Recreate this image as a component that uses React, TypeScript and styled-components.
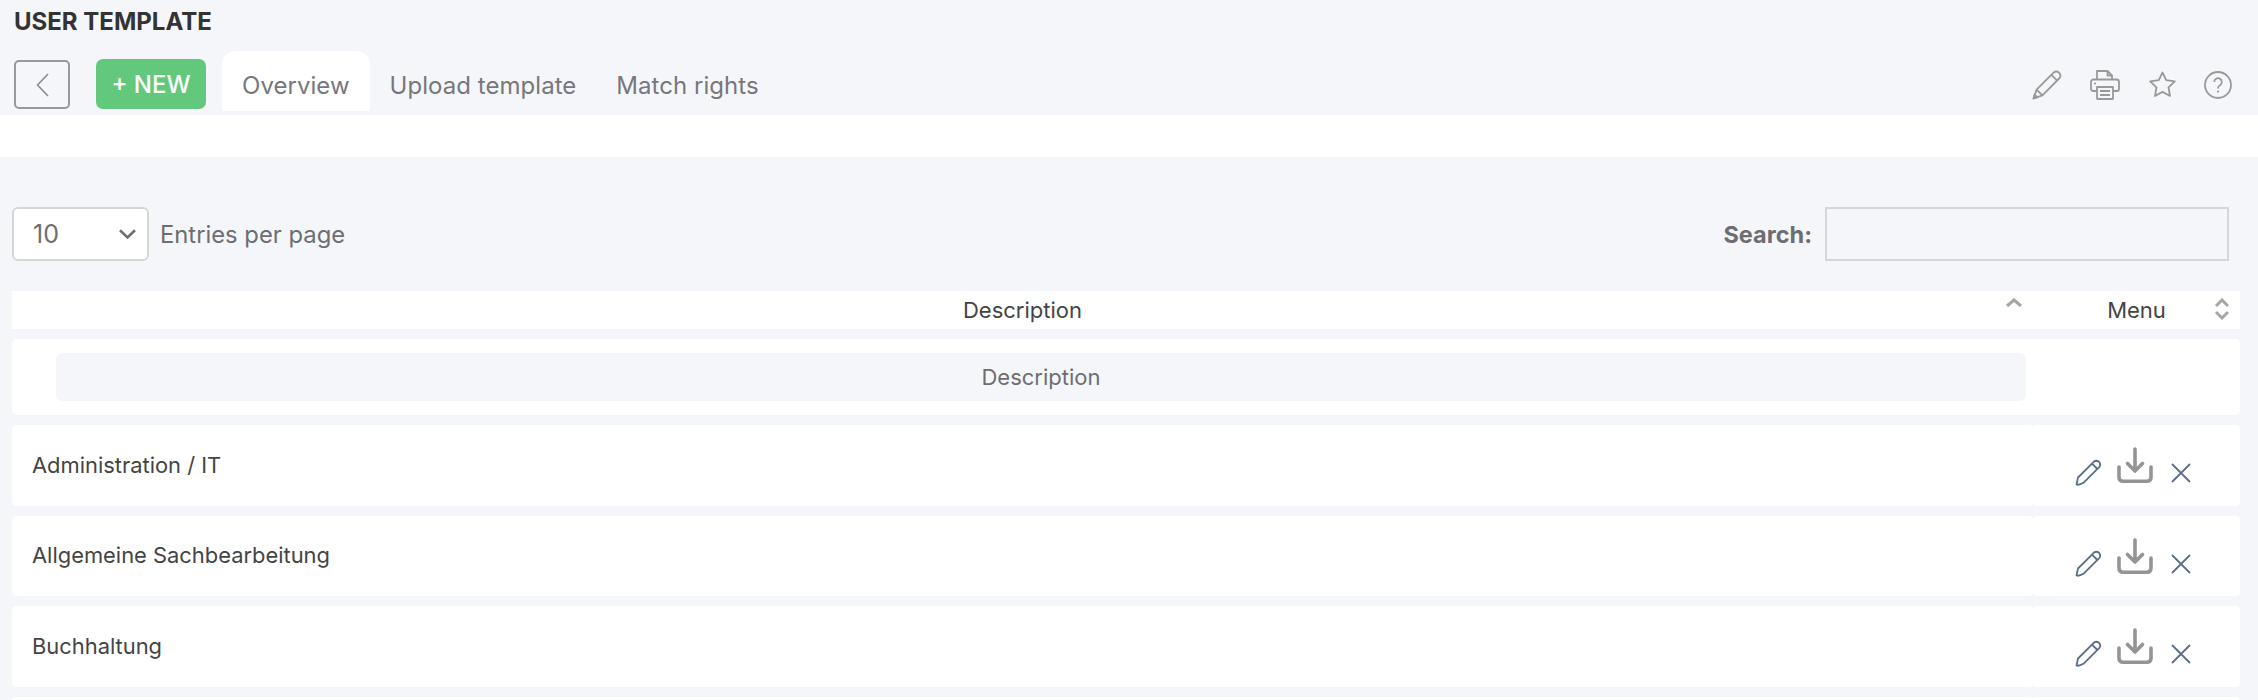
import React from "react";
import styled, { createGlobalStyle } from "styled-components";

const Global = createGlobalStyle`
  html, body { margin: 0; padding: 0; background: #f5f6fa; }
  body { font-family: Inter, "Liberation Sans", sans-serif; overflow: hidden; }
  * { box-sizing: border-box; }
`;

const Page = styled.div`
  width: 2258px;
  height: 700px;
  overflow: hidden;
  background: #f5f6fa;
`;

const Header = styled.header`
  height: 115px;
  padding: 10px 26px 0 14px;
  display: flex;
  flex-direction: column;
`;

const Title = styled.h1`
  margin: 0;
  height: 24px;
  font-size: 24px;
  line-height: 24px;
  font-weight: 700;
  color: #333;
`;

const Toolbar = styled.div`
  margin-top: 17px;
  height: 60px;
  display: flex;
  align-items: flex-end;
`;

const BackButton = styled.button`
  width: 56px;
  height: 49px;
  margin-bottom: 2px;
  padding: 0;
  display: flex;
  align-items: center;
  justify-content: center;
  background: transparent;
  border: 2px solid #999;
  border-radius: 5px;
`;

const NewButton = styled.button`
  width: 110px;
  height: 50px;
  margin: 0 16px 2px 26px;
  padding: 0;
  background: #62c97c;
  border: 0;
  border-radius: 7px;
  color: #fff;
  font: 500 24px Inter, sans-serif;
`;

const Tab = styled.div<{ $active?: boolean }>`
  height: 60px;
  padding: 9px 20px 0;
  display: flex;
  align-items: center;
  font-size: 24px;
  letter-spacing: 0.04px;
  color: #77777c;
  background: ${(p) => (p.$active ? "#fff" : "transparent")};
  border-radius: 14px 14px 0 0;
`;

const HeaderIcons = styled.div`
  margin-left: auto;
  height: 60px;
  padding-top: 7px;
  display: flex;
  align-items: center;
  gap: 28.5px;
  color: #999;
`;

const Band = styled.div`
  height: 42px;
  background: #fff;
`;

const Content = styled.main`
  padding: 50px 18px 0 12px;
`;

const Controls = styled.div`
  height: 54px;
  padding-right: 11px;
  display: flex;
  align-items: center;
  justify-content: space-between;
`;

const LengthControl = styled.div`
  display: flex;
  align-items: center;
  gap: 11px;
  font-size: 23.8px;
  color: #6e6e72;
`;

const SelectBox = styled.div`
  width: 137px;
  height: 54px;
  padding: 0 11px 0 19px;
  display: flex;
  align-items: center;
  justify-content: space-between;
  background: #fff;
  border: 2px solid #d6d6d8;
  border-radius: 6px;
  font-size: 25px;
  color: #6e6e72;
`;

const SearchControl = styled.label`
  display: flex;
  align-items: center;
  gap: 13px;
  font-size: 23.5px;
  font-weight: 700;
  color: #6e6e72;
`;

const SearchInput = styled.input`
  width: 404px;
  height: 54px;
  background: transparent;
  border: 2px solid #d6d6d8;
`;

const Table = styled.div`
  margin-top: 30px;
  display: flex;
  flex-direction: column;
`;

const Row = styled.div<{ $height: string; $gap: string }>`
  height: ${(p) => p.$height};
  margin-bottom: ${(p) => p.$gap};
  display: grid;
  grid-template-columns: 2021px 207px;
  gap: 0;
  flex: none;
`;

const HeadCell = styled.div`
  padding: 0 12px 0 12px;
  display: flex;
  align-items: center;
  justify-content: center;
  background: #fff;
  font-size: 22px;
  color: #444;
  position: relative;
`;

const SortMark = styled.span`
  position: absolute;
  right: 11px;
  top: 7px;
  display: flex;
  color: #aaa;
`;

const FilterCell = styled.div`
  padding: 0 7px 0 44px;
  display: flex;
  align-items: center;
  background: #fff;
  border-radius: 5px 0 0 5px;
`;

const BlankCell = styled.div`
  background: #fff;
  border-radius: 0 5px 5px 0;
`;

const FilterBox = styled.div`
  width: 100%;
  height: 48px;
  display: flex;
  align-items: center;
  justify-content: center;
  background: #f5f6fa;
  border-radius: 6px;
  font-size: 22px;
  color: #6e6e72;
`;

const TextCell = styled.div`
  padding-left: 20px;
  padding-bottom: 1px;
  display: flex;
  align-items: center;
  background: #fff;
  border-radius: 4px;
  font-size: 21.9px;
  color: #444;
`;

const ActionCell = styled.div`
  padding: 22px 0 0 42px;
  display: flex;
  align-items: flex-start;
  background: #fff;
  border-radius: 4px;
`;

const EditIcon = styled.svg`
  margin-top: 12px;
  color: #5a6e8c;
`;

const DownloadIcon = styled.svg`
  margin-left: 15px;
  color: #949494;
`;

const CloseIcon = styled.svg`
  margin: 16px 0 0 18px;
  color: #5a6e8c;
`;

const Chevron = ({ dir }: { dir: "left" | "down" }) =>
  dir === "left" ? (
    <svg width="13" height="24" viewBox="0 0 13 24" fill="none" stroke="#8c8c8c" strokeWidth="1.6">
      <path d="M12 1 1.5 12 12 23" />
    </svg>
  ) : (
    <svg width="17" height="10" viewBox="0 0 17 10" fill="none" stroke="#6e6e72" strokeWidth="2.6">
      <path d="M1 1.2 8.5 8.4 16 1.2" />
    </svg>
  );

const PencilGlyph = () => (
  <svg width="30" height="30" viewBox="0 0 30 30" fill="none" stroke="currentColor" strokeWidth="1.8" strokeLinejoin="round">
    <path d="M1.5 28.5 4.6 19.6 21.8 2.4Q24.4.4 27 2.6 29.6 5.2 27.6 8L10.4 25.4Z" />
    <path d="M4.6 19.6 10.4 25.4M19.4 4.8 25.2 10.6" />
    <path d="M1.5 28.5 2.6 24.6 5.4 27.4Z" fill="currentColor" />
  </svg>
);

const PrinterGlyph = () => (
  <svg width="30" height="30" viewBox="0 0 30 30" fill="none" stroke="currentColor" strokeWidth="1.8" strokeLinejoin="round">
    <path d="M7 10V1h10.5L22 5.5V10" />
    <path d="M17.5 1v4.5H22" />
    <path d="M7 21H3a2 2 0 0 1-2-2v-7a2.5 2.5 0 0 1 2.5-2.5h23A2.5 2.5 0 0 1 29 12v7a2 2 0 0 1-2 2h-4" />
    <path d="M7 17h16v11.5a.5.5 0 0 1-.5.5h-15a.5.5 0 0 1-.5-.5Z" />
    <path d="M10 21h10M10 25h10" />
    <circle cx="5" cy="13.5" r="1.1" fill="currentColor" stroke="none" />
  </svg>
);

const StarGlyph = () => (
  <svg width="27" height="27" viewBox="0 0 27 27" fill="none" stroke="currentColor" strokeWidth="1.8" strokeLinejoin="round">
    <path d="M13.5 1.500 17.2 9.200 25.800 10.400 19.500 16.400 21 25 13.500 20.900 6 25 7.500 16.400 1.200 10.400 9.800 9.200Z" />
  </svg>
);

const HelpGlyph = () => (
  <svg width="28" height="28" viewBox="0 0 28 28" fill="none" stroke="currentColor" strokeWidth="1.8">
    <circle cx="14" cy="14" r="13" />
    <path d="M10.2 11a3.8 3.8 0 1 1 5.8 3.2c-1.4.9-2 1.6-2 3v.4" />
    <circle cx="14" cy="20.6" r="1.1" fill="currentColor" stroke="none" />
  </svg>
);

const SortUp = () => (
  <svg width="16" height="9" viewBox="0 0 16 9" fill="none" stroke="#a6a6a6" strokeWidth="3.2">
    <path d="M1 8 8 2 15 8" />
  </svg>
);

const SortBoth = () => (
  <svg width="14" height="22" viewBox="0 0 14 22" fill="none" stroke="#a6a6a6" strokeWidth="3">
    <path d="M1 8 7 2 13 8M1 14 7 20 13 14" />
  </svg>
);

const Actions = () => (
  <ActionCell>
    <EditIcon width="27" height="27" viewBox="0 0 27 27" fill="none" stroke="currentColor" strokeWidth="1.8" strokeLinejoin="round">
      <path d="M1.5 25.5 3 18.5 19 2.6Q21.5.8 24 2.8 26.2 5.2 24.4 7.8L8.4 23.8Q4 26.4 1.5 25.5Z" />
      <path d="M17 4.6 22.4 10" />
    </EditIcon>
    <DownloadIcon width="36" height="36" viewBox="0 0 36 36" fill="none" stroke="currentColor" strokeWidth="3.6" strokeLinecap="round" strokeLinejoin="round">
      <path d="M18 2V24M10.500 16.500 18 24 25.500 16.500" />
      <path d="M2 20V30Q2 34.200 6.500 34.200H29.500Q34 34.200 34 30V20" />
    </DownloadIcon>
    <CloseIcon width="20" height="20" viewBox="0 0 20 20" fill="none" stroke="currentColor" strokeWidth="1.8">
      <path d="M1 1 19 19M19 1 1 19" />
    </CloseIcon>
  </ActionCell>
);

const rows = ["Administration / IT", "Allgemeine Sachbearbeitung", "Buchhaltung"];

export default function App() {
  return (
    <Page>
      <Global />
      <Header>
        <Title>USER TEMPLATE</Title>
        <Toolbar>
          <BackButton aria-label="Back">
            <Chevron dir="left" />
          </BackButton>
          <NewButton>+ NEW</NewButton>
          <Tab $active>Overview</Tab>
          <Tab>Upload template</Tab>
          <Tab>Match rights</Tab>
          <HeaderIcons>
            <PencilGlyph />
            <PrinterGlyph />
            <StarGlyph />
            <HelpGlyph />
          </HeaderIcons>
        </Toolbar>
      </Header>
      <Band />
      <Content>
        <Controls>
          <LengthControl>
            <SelectBox>
              10
              <Chevron dir="down" />
            </SelectBox>
            Entries per page
          </LengthControl>
          <SearchControl>
            Search:
            <SearchInput />
          </SearchControl>
        </Controls>
        <Table>
          <Row $height="38px" $gap="10px">
            <HeadCell>
              Description
              <SortMark>
                <SortUp />
              </SortMark>
            </HeadCell>
            <HeadCell>
              Menu
              <SortMark>
                <SortBoth />
              </SortMark>
            </HeadCell>
          </Row>
          <Row $height="76px" $gap="10px">
            <FilterCell>
              <FilterBox>Description</FilterBox>
            </FilterCell>
            <BlankCell />
          </Row>
          {rows.map((name) => (
            <Row key={name} $height="80.5px" $gap="10px">
              <TextCell>{name}</TextCell>
              <Actions />
            </Row>
          ))}
          <Row $height="80.5px" $gap="0">
            <TextCell />
            <BlankCell />
          </Row>
        </Table>
      </Content>
    </Page>
  );
}
